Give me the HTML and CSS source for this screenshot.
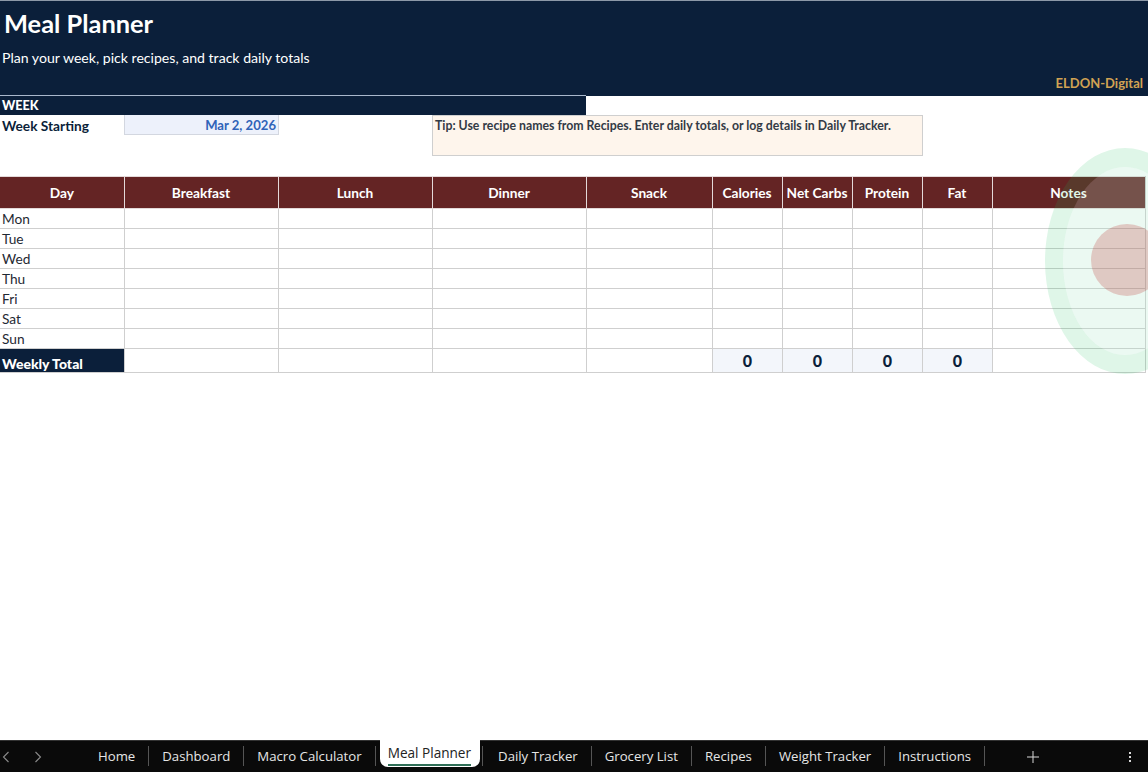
FILE: index.html
```html
<!DOCTYPE html>
<html lang="en">
  <head>
    <meta charset="UTF-8" />
    <title>Meal Planner</title>
    <link rel="stylesheet" href="styles.css">
  </head>

  <body>
    <div class="sheet">
      <div class="banner">
        <div class="title">Meal Planner</div>
        <div class="subtitle">Plan your week, pick recipes, and track daily totals</div>
        <div class="brand">ELDON-Digital</div>
      </div>

      <div class="week-bar">WEEK</div>

      <div class="week-row">
        <div class="week-label">Week Starting</div>
        <div class="week-date">Mar 2, 2026</div>
        <div class="tip">Tip: Use recipe names from Recipes. Enter daily totals, or log details in Daily Tracker.</div>
      </div>

      <table class="planner">
        <colgroup>
          <col class="col-day" />
          <col class="col-meal" />
          <col class="col-meal" />
          <col class="col-meal" />
          <col class="col-snack" />
          <col class="col-num" />
          <col class="col-num" />
          <col class="col-num" />
          <col class="col-num" />
          <col class="col-notes" />
        </colgroup>
        <thead>
          <tr>
            <th>Day</th>
            <th>Breakfast</th>
            <th>Lunch</th>
            <th>Dinner</th>
            <th>Snack</th>
            <th>Calories</th>
            <th>Net Carbs</th>
            <th>Protein</th>
            <th>Fat</th>
            <th>Notes</th>
          </tr>
        </thead>
        <tbody>
          <tr><td>Mon</td><td></td><td></td><td></td><td></td><td></td><td></td><td></td><td></td><td></td></tr>
          <tr><td>Tue</td><td></td><td></td><td></td><td></td><td></td><td></td><td></td><td></td><td></td></tr>
          <tr><td>Wed</td><td></td><td></td><td></td><td></td><td></td><td></td><td></td><td></td><td></td></tr>
          <tr><td>Thu</td><td></td><td></td><td></td><td></td><td></td><td></td><td></td><td></td><td></td></tr>
          <tr><td>Fri</td><td></td><td></td><td></td><td></td><td></td><td></td><td></td><td></td><td></td></tr>
          <tr><td>Sat</td><td></td><td></td><td></td><td></td><td></td><td></td><td></td><td></td><td></td></tr>
          <tr><td>Sun</td><td></td><td></td><td></td><td></td><td></td><td></td><td></td><td></td><td></td></tr>
          <tr class="total">
            <td class="total-label">Weekly Total</td>
            <td></td>
            <td></td>
            <td></td>
            <td></td>
            <td class="total-num">0</td>
            <td class="total-num">0</td>
            <td class="total-num">0</td>
            <td class="total-num">0</td>
            <td></td>
          </tr>
        </tbody>
      </table>

      <!-- watermark floating over the cells -->
      <svg class="watermark" width="103" height="226" viewBox="0 0 103 226">
        <path fill="#1ebe5c" fill-opacity="0.142" fill-rule="evenodd" d="M80 0a80 113 0 1 0 0 226a80 113 0 1 0 0-226zM80 19a62 94 0 1 1 0 188a62 94 0 1 1 0-188z" />
        <ellipse cx="80" cy="113" rx="62" ry="94" fill="#abe5c8" fill-opacity="0.24" />
        <circle cx="82" cy="112" r="36" fill="#b41f1c" fill-opacity="0.22" />
      </svg>
    </div>

    <div class="tabbar">
      <div class="nav-arrows">
        <svg width="8" height="12" viewBox="0 0 8 12"><path d="M6.5 1L1.5 6l5 5" fill="none" stroke="#8a8a8a" stroke-width="1.1" /></svg>
        <svg width="8" height="12" viewBox="0 0 8 12"><path d="M1.5 1l5 5-5 5" fill="none" stroke="#8a8a8a" stroke-width="1.1" /></svg>
      </div>
      <div class="tabs">
        <div class="tab">Home</div>
        <div class="tab">Dashboard</div>
        <div class="tab">Macro Calculator</div>
        <div class="tab active"><span>Meal Planner</span></div>
        <div class="tab after-active">Daily Tracker</div>
        <div class="tab">Grocery List</div>
        <div class="tab">Recipes</div>
        <div class="tab">Weight Tracker</div>
        <div class="tab">Instructions</div>
      </div>
      <svg class="add-tab" width="12" height="12" viewBox="0 0 12 12"><path d="M6 0v12M0 6h12" stroke="#d8d8d8" stroke-width="1" /></svg>
      <div class="more"><i></i><i></i><i></i></div>
    </div>
  </body>
</html>
```

FILE: styles.css
```css
html,
body {
  height: 100%;
}
body {
  margin: 0;
  display: flex;
  flex-direction: column;
  overflow: hidden;
  background-color: #fff;
  color: #0b1f3a;
  font-family: "Lato", "Liberation Sans", sans-serif;
  font-size: 13.7px;
}
.sheet {
  position: relative;
  flex: 1;
  overflow: hidden;
}

.banner {
  position: relative;
  height: 95px;
  border-top: 1px solid #8d99a8;
  background-color: #0b1f3a;
  color: #fff;
}
.title {
  padding: 7px 0 0 4px;
  font-size: 25.4px;
  font-weight: 700;
  line-height: 30px;
}
.subtitle {
  padding: 11px 0 0 2px;
  font-size: 14.1px;
  line-height: 18px;
}
.brand {
  position: absolute;
  right: 5px;
  bottom: 4px;
  color: #d1a253;
  font-size: 13px;
  font-weight: 700;
  line-height: 18px;
}

.week-bar {
  position: relative;
  box-sizing: border-box;
  width: 586px;
  height: 20px;
  margin-top: -1px;
  padding-left: 2px;
  border-top: 1px solid #a9b8cc;
  background-color: #0b1f3a;
  color: #fff;
  font-size: 12.6px;
  font-weight: 900;
  line-height: 19px;
}

.week-row {
  display: grid;
  grid-template-columns: 124px 155px 153px 491px;
  height: 61px;
  align-items: start;
}
.week-label {
  padding-left: 2px;
  font-weight: 700;
  line-height: 22px;
}
.week-date {
  box-sizing: border-box;
  height: 20px;
  padding-right: 2px;
  border: 1px solid #d3d7e0;
  border-top: 0;
  background-color: #edf1fb;
  color: #2f63b8;
  font-size: 13.1px;
  font-weight: 700;
  line-height: 21px;
  text-align: right;
}
.tip {
  grid-column: 4;
  box-sizing: border-box;
  height: 41px;
  padding: 2px;
  border: 1px solid #cfcfcf;
  background-color: #fef5ec;
  color: #333a45;
  font-size: 12.3px;
  font-weight: 700;
  line-height: 15px;
}

.planner {
  table-layout: fixed;
  width: 1145px;
  border-collapse: collapse;
}
.col-day {
  width: 124px;
}
.col-meal {
  width: 154px;
}
.col-snack {
  width: 126px;
}
.col-num {
  width: 70px;
}
.col-notes {
  width: 153px;
}
th {
  height: 30px;
  padding: 0 0 1px;
  border: 1px solid #e4d9d9;
  border-width: 1px 1px 1px 0;
  background-color: #642424;
  color: #fff;
  font-weight: 700;
  text-align: center;
}
th:last-child {
  border-right-color: #c9c9c9;
}
td {
  height: 19px;
  padding: 0 0 0 2px;
  border: 1px solid #cfcfcf;
  border-width: 0 1px 1px 0;
  line-height: 19px;
  color: #1f2933;
}
.total td {
  height: 23px;
}
td.total-label {
  vertical-align: bottom;
  background-color: #0b1f3a;
  color: #fff;
  font-size: 14px;
  font-weight: 900;
  line-height: 17px;
}
td.total-num {
  padding: 0 0 0 1px;
  background-color: #f3f6fb;
  color: #0b1f3a;
  font-size: 16px;
  font-weight: 900;
  text-align: center;
}

.watermark {
  position: absolute;
  top: 148px;
  right: 0;
  pointer-events: none;
}

.tabbar {
  display: flex;
  align-items: center;
  box-sizing: border-box;
  height: 32px;
  border-top: 1px solid #333;
  background-color: #0a0a0a;
  color: #e6e6e6;
  font-family: "Open Sans", "Liberation Sans", sans-serif;
  font-size: 13.2px;
  white-space: nowrap;
}
.nav-arrows {
  display: flex;
  gap: 24px;
  width: 85px;
  padding-left: 2px;
  box-sizing: border-box;
}
.tabs {
  display: flex;
  align-self: stretch;
  width: 901px;
}
.tab {
  display: flex;
  align-items: center;
  height: 20px;
  margin-top: 5px;
  padding: 0 13px;
  border-right: 1px solid #555;
}
.tab.active {
  height: 27px;
  margin: -1px 2px 0 4px;
  padding: 0 9px 0 8px;
  border-right: 0;
  border-radius: 0 0 8px 8px;
  background-color: #fff;
  color: #222;
  font-size: 13.6px;
}
.tab.active span {
  padding: 2px 0 1px;
  border-bottom: 2px solid #2f6f57;
  line-height: 20px;
}
.tab.after-active {
  padding-left: 15px;
  border-left: 1px solid #555;
}
.add-tab {
  margin-left: 41px;
}
.more {
  display: flex;
  flex-direction: column;
  gap: 2px;
  margin-left: 90px;
}
.more i {
  width: 2px;
  height: 2px;
  background-color: #d8d8d8;
}
```
